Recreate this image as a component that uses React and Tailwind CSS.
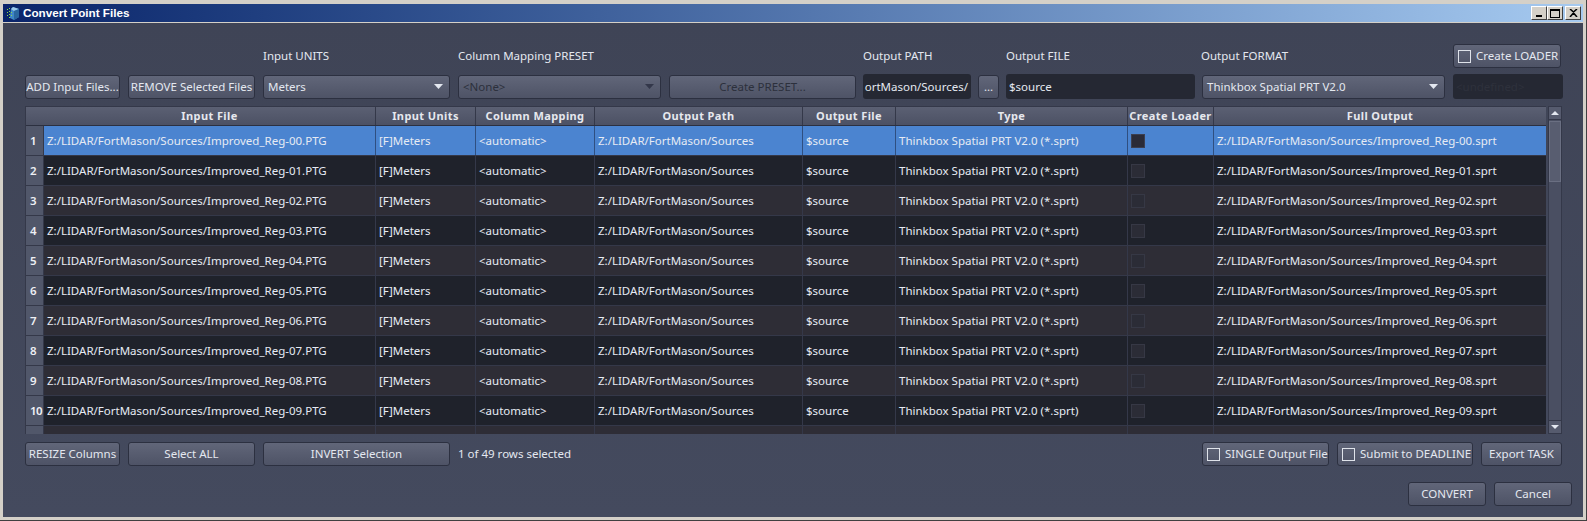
const columns = [
  { title: 'Input File', width: 'w-[332px]' },
  { title: 'Input Units', width: 'w-[100px]' },
  { title: 'Column Mapping', width: 'w-[119px]' },
  { title: 'Output Path', width: 'w-[208px]' },
  { title: 'Output File', width: 'w-[93px]' },
  { title: 'Type', width: 'w-[232px]' },
  { title: 'Create Loader', width: 'w-[86px]' },
  { title: 'Full Output', width: 'w-[333px]' },
]

const rows = Array.from({ length: 11 }, (_, i) => i)

function Button({ children, className = '', disabled = false }) {
  return (
    <button
      className={`flex h-[24px] shrink-0 items-center justify-center whitespace-nowrap rounded-[3px] border border-[#2c3040] bg-gradient-to-b from-[#616679] to-[#4e5366] text-[11.5px] ${disabled ? 'text-[#2c303c]' : 'text-[#e4e8f0]'} ${className}`}
    >
      {children}
    </button>
  )
}

function CheckButton({ label, className = '' }) {
  return (
    <Button className={`justify-start gap-[5px] pl-[4px] ${className}`}>
      <span className="h-[13px] w-[13px] shrink-0 border border-[#dfe3ea]" />
      {label}
    </Button>
  )
}

function Combo({ label, className = '', disabled = false }) {
  return (
    <div
      className={`flex h-[24px] shrink-0 items-center justify-between rounded-[3px] border border-[#2c3040] bg-gradient-to-b from-[#616679] to-[#4e5366] pl-[4px] pr-[6px] text-[11.5px] ${disabled ? 'text-[#2c303c]' : 'text-[#e4e8f0]'} ${className}`}
    >
      <span>{label}</span>
      <svg width="9" height="5" viewBox="0 0 9 5">
        <path d="M0 0h9L4.5 5z" fill={disabled ? '#33374a' : '#e4e8f0'} />
      </svg>
    </div>
  )
}

function Input({ children, className = '', color = 'text-[#e4e8f0]' }) {
  return (
    <div
      className={`flex h-[25px] shrink-0 items-center overflow-hidden whitespace-nowrap rounded-[3px] bg-[#252833] text-[11.5px] ${color} ${className}`}
    >
      {children}
    </div>
  )
}

function Row({ index }) {
  const selected = index === 0
  const num = String(index).padStart(2, '0')
  const bg = selected ? 'bg-[#4b84d0]' : index % 2 === 1 ? 'bg-[#1f222b]' : 'bg-[#2e2d36]'
  const last = index === 10
  const values = last
    ? ['', '', '', '', '', '', null, '']
    : [
        `Z:/LIDAR/FortMason/Sources/Improved_Reg-${num}.PTG`,
        '[F]Meters',
        '<automatic>',
        'Z:/LIDAR/FortMason/Sources',
        '$source',
        'Thinkbox Spatial PRT V2.0 (*.sprt)',
        null,
        `Z:/LIDAR/FortMason/Sources/Improved_Reg-${num}.sprt`,
      ]

  return (
    <div className={`flex h-[30px] shrink-0 border-b border-[#343849] ${bg}`}>
      <div className="flex w-[18px] shrink-0 items-center border-r border-[#343849] bg-[#51576a] pl-[4px] text-[11.5px] font-semibold tracking-[-0.5px] text-[#eef0f5]">
        {!last && index + 1}
      </div>
      {columns.map((col, c) => (
        <div
          key={col.title}
          className={`flex shrink-0 items-center overflow-hidden whitespace-nowrap border-r pl-[3px] text-[11.5px] text-[#e6ebf4] ${selected ? 'border-[#2f4f80]' : 'border-[#343849]'} ${col.width}`}
        >
          {values[c] === null ? (
            <span
              className={`h-[14px] w-[14px] border ${selected ? 'border-[#3c3f50] bg-[#2a2b38]' : 'border-[#363845] bg-[#2b2c36]'}`}
            />
          ) : (
            values[c]
          )}
        </div>
      ))}
    </div>
  )
}

function TitleIcon() {
  return (
    <svg width="15" height="15" viewBox="0 0 15 15" className="ml-[3px] shrink-0">
      <path d="M7 1l6 2v8l-5 3-4-2V9l1-6z" fill="#3f86c8" />
      <path d="M7 1l6 2-5 2-3-2z" fill="#9cc8ea" />
      <path d="M8 5l5-2v8l-5 3z" fill="#2a669f" />
      <g fill="#8fdc4a">
        <rect x="1" y="3" width="1" height="1" />
        <rect x="3" y="2" width="1" height="1" />
        <rect x="1" y="6" width="1" height="1" />
        <rect x="3" y="5" width="1" height="1" />
        <rect x="1" y="9" width="1" height="1" />
        <rect x="3" y="8" width="1" height="1" />
        <rect x="5" y="6" width="1" height="1" />
        <rect x="5" y="9" width="1" height="1" />
        <rect x="3" y="11" width="1" height="1" />
      </g>
    </svg>
  )
}

function WinButton({ children, className = '' }) {
  return (
    <div
      className={`flex h-[14px] w-[16px] items-center justify-center border-b border-l border-r border-t border-b-[#404040] border-l-white border-r-[#404040] border-t-white bg-[#d4d0c8] ${className}`}
    >
      {children}
    </div>
  )
}

export default function App() {
  return (
    <div className="h-[521px] w-[1587px] overflow-hidden border-b border-r border-b-[#404040] border-r-[#404040] bg-[#d4d0c8] pb-[3px] pl-[3px] pr-[3px] pt-[4px] font-['Noto_Sans',sans-serif]">
      <div className="flex h-full flex-col">
        {/* Title bar */}
        <div className="flex h-[18px] shrink-0 items-center bg-gradient-to-r from-[#0a246a] to-[#a6caf0]">
          <TitleIcon />
          <span className="ml-[2px] font-['Liberation_Sans',sans-serif] text-[11.7px] font-bold text-white">
            Convert Point Files
          </span>
          <div className="ml-auto mr-[2px] flex">
            <WinButton>
              <span className="mt-[6px] h-[2px] w-[6px] bg-black" />
            </WinButton>
            <WinButton className="mr-[2px]">
              <span className="h-[9px] w-[10px] border border-t-2 border-black" />
            </WinButton>
            <WinButton>
              <svg width="9" height="8" viewBox="0 0 9 8">
                <path d="M1 0l3.5 3L8 0M1 8l3.5-4L8 8" stroke="#000" strokeWidth="1.5" fill="none" />
              </svg>
            </WinButton>
          </div>
        </div>

        <div className="min-h-0 flex-1 border-t border-[#d4d0c8] bg-gradient-to-b from-[#3f4456] to-[#444a5e] pl-[22px] pr-[21px] text-[11.5px] text-[#e4e8f0]">
          {/* Labels */}
          <div className="mt-[21px] flex h-[24px] items-center">
            <span className="w-[238px]" />
            <span className="w-[195px]">Input UNITS</span>
            <span className="w-[405px]">Column Mapping PRESET</span>
            <span className="w-[143px]">Output PATH</span>
            <span className="w-[195px]">Output FILE</span>
            <span className="w-[252px]">Output FORMAT</span>
            <CheckButton label="Create LOADER" className="w-[108px]" />
          </div>

          {/* Toolbar */}
          <div className="mt-[6px] flex h-[25px] items-center">
            <Button className="w-[95px]">ADD Input Files...</Button>
            <Button className="ml-[8px] w-[127px]">REMOVE Selected Files</Button>
            <Combo label="Meters" className="ml-[8px] w-[187px]" />
            <Combo label="<None>" disabled className="ml-[8px] w-[203px]" />
            <Button disabled className="ml-[8px] w-[187px]">Create PRESET...</Button>
            <Input className="ml-[7px] w-[108px] justify-end pr-[3px]">ortMason/Sources/</Input>
            <Button className="ml-[7px] w-[21px]">...</Button>
            <Input className="ml-[7px] w-[189px] pl-[3px]">$source</Input>
            <Combo label="Thinkbox Spatial PRT V2.0" className="ml-[7px] w-[243px]" />
            <Input color="text-[#2e313c]" className="ml-[8px] w-[110px] pl-[3px]">&lt;undefined&gt;</Input>
          </div>

          {/* Table */}
          <div className="mt-[7px] flex">
            <div className="flex h-[328px] w-[1522px] flex-col overflow-hidden border-l border-t border-[#343849]">
              <div className="flex h-[19px] shrink-0 border-b border-[#2c3040] bg-gradient-to-b from-[#5b6073] to-[#4c5164]">
                <span className="w-[18px] shrink-0 border-r border-transparent" />
                {columns.map((col) => (
                  <div
                    key={col.title}
                    className={`flex shrink-0 items-center justify-center whitespace-nowrap border-r border-[#343849] text-[11px] font-bold tracking-[0.4px] text-[#e6e8ee] ${col.width}`}
                  >
                    {col.title}
                  </div>
                ))}
              </div>
              {rows.map((i) => (
                <Row key={i} index={i} />
              ))}
            </div>

            {/* Scrollbar */}
            <div className="ml-[2px] flex h-[328px] w-[14px] flex-col border border-[#343849] bg-[#4a4f62]">
              <div className="flex h-[13px] shrink-0 items-center justify-center border-b border-[#343849] bg-[#565b6e]">
                <svg width="8" height="4" viewBox="0 0 8 4">
                  <path d="M4 0l4 4H0z" fill="#e4e8f0" />
                </svg>
              </div>
              <div className="mt-[1px] h-[61px] border border-[#6a6f82] bg-[#585d70]" />
              <div className="flex-1" />
              <div className="flex h-[13px] shrink-0 items-center justify-center border-t border-[#343849] bg-[#565b6e]">
                <svg width="8" height="4" viewBox="0 0 8 4">
                  <path d="M0 0h8L4 4z" fill="#e4e8f0" />
                </svg>
              </div>
            </div>
          </div>

          {/* Bottom actions */}
          <div className="mt-[8px] flex items-center">
            <Button className="w-[95px]">RESIZE Columns</Button>
            <Button className="ml-[8px] w-[127px]">Select ALL</Button>
            <Button className="ml-[8px] w-[187px]">INVERT Selection</Button>
            <span className="ml-[8px]">1 of 49 rows selected</span>
            <div className="ml-auto flex gap-[8px]">
              <CheckButton label="SINGLE Output File" className="w-[127px]" />
              <CheckButton label="Submit to DEADLINE" className="w-[136px]" />
              <Button className="w-[81px]">Export TASK</Button>
            </div>
          </div>

          <div className="-mr-[10px] mt-[16px] flex justify-end gap-[8px]">
            <Button className="w-[78px]">CONVERT</Button>
            <Button className="w-[78px]">Cancel</Button>
          </div>
        </div>
      </div>
    </div>
  )
}
